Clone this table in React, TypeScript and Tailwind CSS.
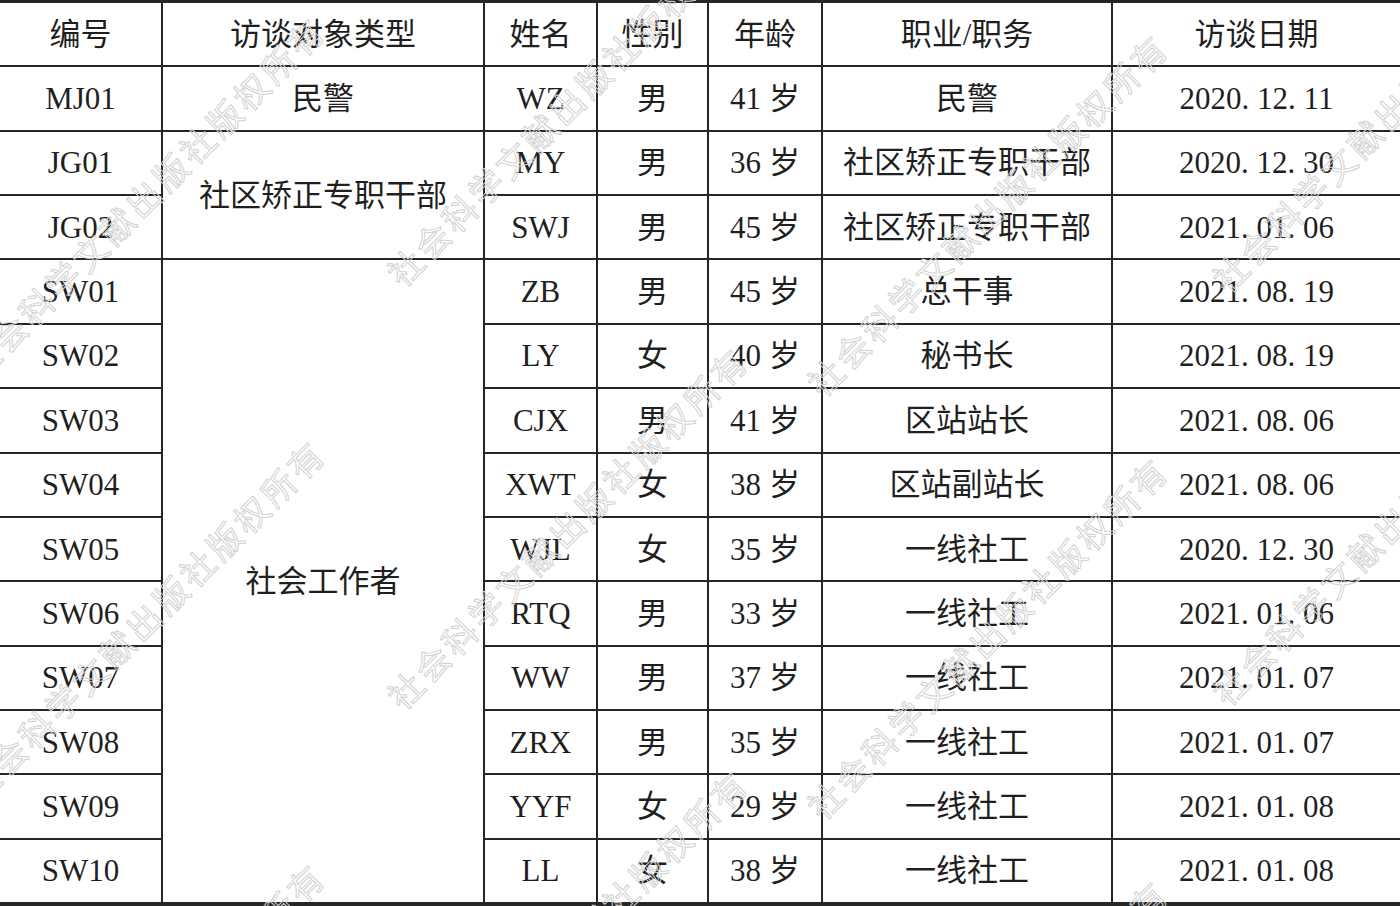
const HEADERS = ["编号", "访谈对象类型", "姓名", "性别", "年龄", "职业/职务", "访谈日期"];

type Row = {
  id: string;
  group?: { label: string; span: number };
  name: string;
  sex: string;
  age: string;
  job: string;
  date: string;
};

const ROWS: Row[] = [
  { id: "MJ01", group: { label: "民警", span: 1 }, name: "WZ", sex: "男", age: "41", job: "民警", date: "2020. 12. 11" },
  { id: "JG01", group: { label: "社区矫正专职干部", span: 2 }, name: "MY", sex: "男", age: "36", job: "社区矫正专职干部", date: "2020. 12. 30" },
  { id: "JG02", name: "SWJ", sex: "男", age: "45", job: "社区矫正专职干部", date: "2021. 01. 06" },
  { id: "SW01", group: { label: "社会工作者", span: 10 }, name: "ZB", sex: "男", age: "45", job: "总干事", date: "2021. 08. 19" },
  { id: "SW02", name: "LY", sex: "女", age: "40", job: "秘书长", date: "2021. 08. 19" },
  { id: "SW03", name: "CJX", sex: "男", age: "41", job: "区站站长", date: "2021. 08. 06" },
  { id: "SW04", name: "XWT", sex: "女", age: "38", job: "区站副站长", date: "2021. 08. 06" },
  { id: "SW05", name: "WJL", sex: "女", age: "35", job: "一线社工", date: "2020. 12. 30" },
  { id: "SW06", name: "RTQ", sex: "男", age: "33", job: "一线社工", date: "2021. 01. 06" },
  { id: "SW07", name: "WW", sex: "男", age: "37", job: "一线社工", date: "2021. 01. 07" },
  { id: "SW08", name: "ZRX", sex: "男", age: "35", job: "一线社工", date: "2021. 01. 07" },
  { id: "SW09", name: "YYF", sex: "女", age: "29", job: "一线社工", date: "2021. 01. 08" },
  { id: "SW10", name: "LL", sex: "女", age: "38", job: "一线社工", date: "2021. 01. 08" },
];

// centre of the first glyph of each watermark line
const MARKS: [number, number][] = [
  [-18, 360], [-18, 783], [-18, 1206],
  [405, 267], [405, 690], [405, 1113],
  [825, 377], [825, 800], [825, 1223],
  [1230, 273], [1230, 686],
];

const SPAN_CLASS: Record<number, string> = {
  1: "row-span-1",
  2: "row-span-2",
  10: "row-span-10",
};

function Cell({ children, className = "" }: { children: React.ReactNode; className?: string }) {
  return (
    <div className={`bg-white flex items-center justify-center whitespace-nowrap ${className}`}>
      {children}
    </div>
  );
}

export default function App() {
  return (
    <div
      className="relative w-[1400px] h-[906px] overflow-hidden bg-white text-[#1f1f1f] text-[31px] leading-none"
      style={{ fontFamily: '"Liberation Serif", "Noto Sans CJK SC", serif' }}
    >
      <div className="grid h-full grid-cols-[161px_320px_111px_109px_112px_288px_287px] grid-rows-[repeat(14,minmax(0,1fr))] gap-[2px] bg-[#262626] pt-[3px] pb-[4px]">
        {HEADERS.map((h) => (
          <Cell key={h}>{h}</Cell>
        ))}
        {ROWS.map((r) => (
          <>
            <Cell key={r.id}>{r.id}</Cell>
            {r.group && (
              <Cell key={r.id + "-g"} className={SPAN_CLASS[r.group.span]}>
                {r.group.label}
              </Cell>
            )}
            <Cell key={r.id + "-n"}>{r.name}</Cell>
            <Cell key={r.id + "-s"}>{r.sex}</Cell>
            <Cell key={r.id + "-a"}>
              {r.age}
              <span className="ml-[8px]">岁</span>
            </Cell>
            <Cell key={r.id + "-j"}>{r.job}</Cell>
            <Cell key={r.id + "-d"}>{r.date}</Cell>
          </>
        ))}
      </div>

      {/* publisher watermark */}
      {MARKS.map(([x, y], i) => (
        <div
          key={i}
          className="pointer-events-none absolute h-[34px] origin-left -rotate-45 whitespace-nowrap text-[34px] leading-[34px] tracking-[4px] text-transparent [-webkit-text-stroke:1px_#d2d2d2]"
          style={{ left: x - 12, top: y - 5, fontFamily: '"Noto Sans CJK SC", sans-serif' }}
        >
          社会科学文献出版社版权所有
        </div>
      ))}
    </div>
  );
}
